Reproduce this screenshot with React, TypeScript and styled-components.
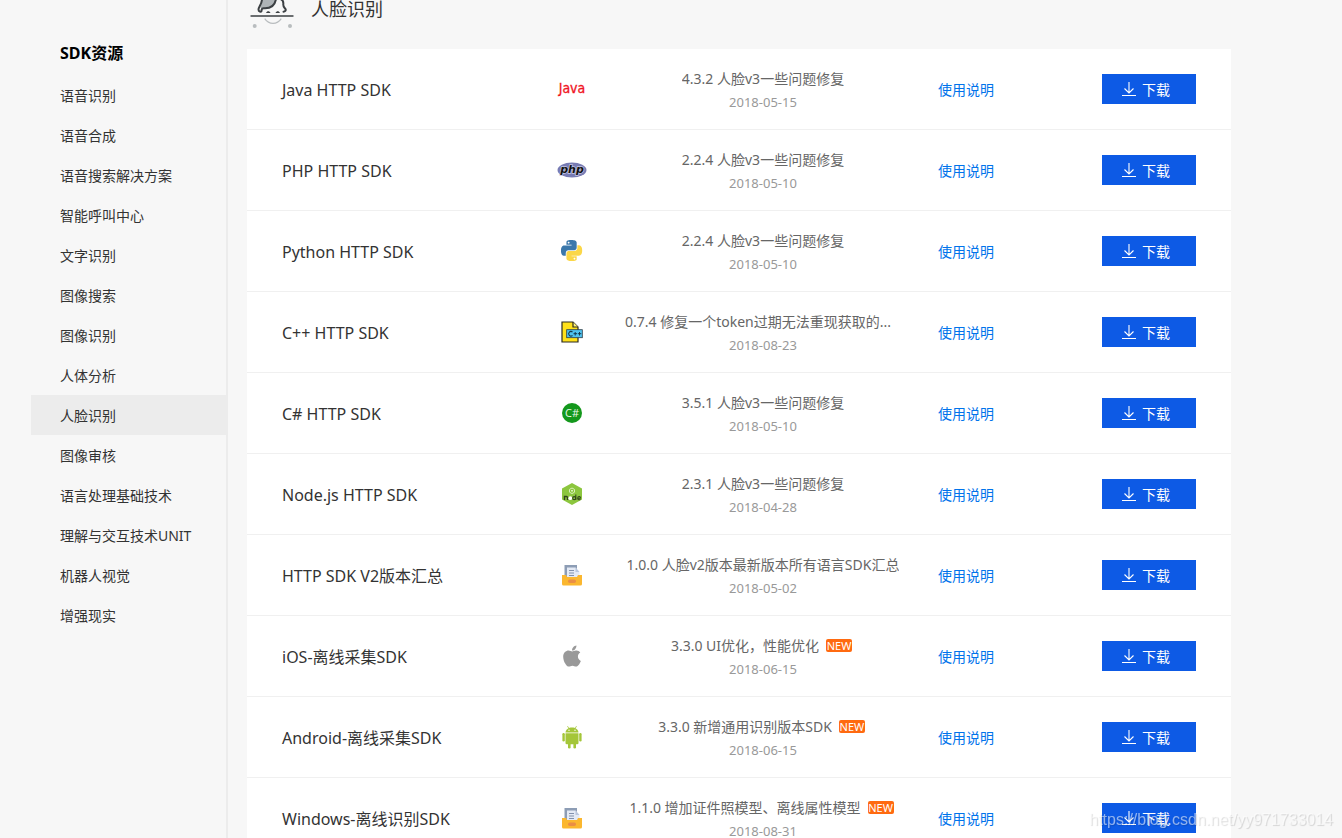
import React from "react";
import styled, { createGlobalStyle } from "styled-components";
import { FaApple } from "react-icons/fa";

const GlobalStyle = createGlobalStyle`
  * { box-sizing: border-box; }
  body {
    margin: 0;
    background: #f7f7f7;
    color: #333;
    font-family: "Noto Sans", "Noto Sans CJK SC", sans-serif;
    font-size: 14px;
  }
`;

const Page = styled.div`
  display: flex;
  height: 100vh;
  overflow: hidden;
  padding: 0 111px 0 31px;
`;

const Sidebar = styled.nav`
  flex: 0 0 197px;
  padding-top: 31px;
  border-right: 2px solid #ececec;
`;

const SidebarTitle = styled.h2`
  margin: 0;
  padding-left: 29px;
  font-size: 16px;
  line-height: 44px;
  color: #000;
`;

const SidebarList = styled.ul`
  margin: 0;
  padding: 0;
  list-style: none;
`;

const SidebarLink = styled.a<{ $active: boolean }>`
  display: block;
  height: 40px;
  padding-left: 29px;
  line-height: 42px;
  color: #333;
  text-decoration: none;
  white-space: nowrap;
  background: ${(p) => (p.$active ? "#ececec" : "transparent")};
`;

const Main = styled.main`
  flex: 1;
  min-width: 0;
  padding-left: 19px;
`;

const SectionHeader = styled.header`
  display: flex;
  align-items: flex-start;
  gap: 17px;
  height: 49px;
  padding-left: 3px;
`;

const SectionTitle = styled.h1`
  margin: 0;
  font-size: 18px;
  font-weight: 400;
  line-height: 18px;
`;

const SdkTable = styled.table`
  width: 100%;
  table-layout: fixed;
  border-collapse: separate;
  border-spacing: 0;
  background: #fff;
`;

const Column = styled.col<{ $width?: number }>`
  width: ${(p) => (p.$width ? `${p.$width}px` : "auto")};
`;

const Row = styled.tr`
  height: 81px;
  > * { border-bottom: 1px solid #f0f0f0; }
`;

const NameCell = styled.th`
  padding: 2px 0 0 35px;
  font-size: 16px;
  font-weight: 400;
  line-height: 24px;
  text-align: left;
`;

const IconCell = styled.td`
  padding: 0;
  text-align: center;
  svg { display: block; margin: 0 auto; }
`;

const VersionCell = styled.td`
  padding: 1px 10px 0;
  text-align: center;
  color: #666;
`;

const VersionLine = styled.div<{ $clipped?: boolean }>`
  display: flex;
  align-items: center;
  justify-content: ${(p) => (p.$clipped ? "flex-start" : "center")};
  gap: 7px;
  line-height: 24px;
`;

const VersionText = styled.span`
  overflow: hidden;
  text-overflow: ellipsis;
  white-space: nowrap;
`;

const NewBadge = styled.span`
  flex: none;
  width: 26px;
  margin-right: 3px;
  border-radius: 2px;
  background: #ff6a10;
  color: #fff;
  font-size: 11px;
  line-height: 13px;
`;

const ReleaseDate = styled.time`
  display: block;
  color: #999;
  font-size: 13px;
  line-height: 22px;
`;

const LinkCell = styled.td`
  padding: 0 0 0 27px;
`;

const DocLink = styled.a`
  color: #0073eb;
  text-decoration: none;
`;

const ActionCell = styled.td`
  padding: 0 35px 0 0;
`;

const DownloadButton = styled.button`
  display: flex;
  align-items: center;
  justify-content: center;
  gap: 6px;
  width: 94px;
  height: 30px;
  margin-left: auto;
  padding: 0 6px 0 0;
  border: 0;
  background: #0d5ae5;
  color: #fff;
  font: inherit;
  cursor: pointer;
`;

const Watermark = styled.div`
  position: fixed;
  right: 9px;
  bottom: 8px;
  font-family: "Liberation Sans", sans-serif;
  font-size: 16px;
  line-height: 20px;
  color: rgba(255, 255, 255, 0.55);
  text-shadow: 1px 1px 1px rgba(0, 0, 0, 0.14);
  pointer-events: none;
`;

const FaceIcon = () => (
  <svg width="44" height="30" viewBox="0 0 44 30" fill="none" aria-hidden="true">
    <path d="M12 0C12 4 10 6 10.500 8L17 8C22 7 26 4 26 0Z" fill="#aeb3b6" />
    <path
      d="M12 -1C12 4 8.500 7 8.500 9.500C8.500 12 11 12 11.500 11C11.500 8.500 12.500 8 14.500 8.300C21 8.500 25 5 26 -1"
      stroke="#3c4043"
      strokeWidth="2"
      strokeLinecap="round"
      strokeLinejoin="round"
    />
    <path
      d="M30.500 -1C33 0 33.500 2 33.300 4C33 7 34.500 7.500 35.500 9C36.200 10.500 35 11.700 33.500 11.700"
      stroke="#3c4043"
      strokeWidth="2"
      strokeLinecap="round"
    />
    <path d="M16 13C17 10.600 19.500 10.600 20.500 13ZM25.500 13C26.500 10.600 29 10.600 30 13Z" fill="#3c4043" />
    <path d="M1 16H43" stroke="#3c4043" strokeWidth="1.400" strokeLinecap="round" />
    <path d="M14.700 18.700C19 25 27 25 31.300 18.700" stroke="#b9bdbf" strokeWidth="1.200" />
    <circle cx="4.700" cy="26" r="2" fill="#b9bdbf" />
    <circle cx="40" cy="26" r="2" fill="#b9bdbf" />
  </svg>
);

const JavaIcon = () => (
  <svg width="30" height="20" viewBox="0 0 30 20" aria-hidden="true">
    <text
      x="15" y="14" textAnchor="middle" fontFamily="Liberation Sans Narrow, DejaVu Sans Condensed, sans-serif" fontSize="14"
      fill="#f0141e" stroke="#f0141e" strokeWidth="0.3"
    >
      Java
    </text>
  </svg>
);

const PhpIcon = () => (
  <svg width="30" height="16" viewBox="0 0 30 16" aria-hidden="true">
    <ellipse cx="15" cy="8" rx="14.500" ry="7.500" fill="#777bb3" />
    <text
      x="15" y="11" textAnchor="middle" fontFamily="DejaVu Sans, sans-serif" fontSize="11" fontWeight="700" fontStyle="italic"
      fill="#111" stroke="#c5c8e6" strokeWidth="1.4" paintOrder="stroke"
    >
      php
    </text>
  </svg>
);

const PythonIcon = () => (
  <svg width="22" height="22" viewBox="0 0 25 25" aria-hidden="true">
    <path
      fill="#3b78ab"
      d="M14.25.18l.9.2.73.26.59.3.45.32.34.34.25.34.16.33.1.3.04.26.02.2-.01.13V8.5l-.05.63-.13.55-.21.46-.26.38-.3.31-.33.25-.35.19-.35.14-.33.1-.3.07-.26.04-.21.02H8.77l-.69.05-.59.14-.5.22-.41.27-.33.32-.27.35-.2.36-.15.37-.1.35-.07.32-.04.27-.02.21v3.06H3.17l-.21-.03-.28-.07-.32-.12-.35-.18-.36-.26-.36-.36-.35-.46-.32-.59-.28-.73-.21-.88-.14-1.05-.05-1.23.06-1.22.16-1.04.24-.87.32-.71.36-.57.4-.44.42-.33.42-.24.4-.16.36-.1.32-.05.24-.01h.16l.06.01h8.16v-.83H6.18l-.01-2.75-.02-.37.05-.34.11-.31.17-.28.25-.26.31-.23.38-.2.44-.18.51-.15.58-.12.64-.1.71-.06.77-.04.84-.02 1.27.05zm-6.3 1.98l-.23.33-.08.41.08.41.23.34.33.22.41.09.41-.09.33-.22.23-.34.08-.41-.08-.41-.23-.33-.33-.22-.41-.09-.41.09z"
    />
    <path
      fill="#fbd748"
      d="M21.04 6.11l.28.06.32.12.35.18.36.27.36.35.35.47.32.59.28.73.21.88.14 1.04.05 1.23-.06 1.23-.16 1.04-.24.86-.32.71-.36.57-.4.45-.42.33-.42.24-.4.16-.36.09-.32.05-.24.02-.16-.01h-8.22v.82h5.84l.01 2.76.02.36-.05.34-.11.31-.17.29-.25.25-.31.24-.38.2-.44.17-.51.15-.58.13-.64.09-.71.07-.77.04-.84.01-1.27-.04-1.07-.14-.9-.2-.73-.25-.59-.3-.45-.33-.34-.34-.25-.34-.16-.33-.1-.3-.04-.25-.02-.2.01-.13v-5.34l.05-.64.13-.54.21-.46.26-.38.3-.32.33-.24.35-.2.35-.14.33-.1.3-.06.26-.04.21-.02.13-.01h5.84l.69-.05.59-.14.5-.21.41-.28.33-.32.27-.35.2-.36.15-.36.1-.35.07-.32.04-.28.02-.21V6.07h2.09l.14.01zM14.57 20.36l-.23.33-.08.41.08.41.23.33.33.23.41.08.41-.08.33-.23.23-.33.08-.41-.08-.41-.23-.33-.33-.23-.41-.08-.41.08z"
    />
  </svg>
);

const CppIcon = () => (
  <svg width="22" height="22" viewBox="0 0 22 22" aria-hidden="true">
    <path d="M1 1H12L17 6V21H1Z" fill="#ffe11a" stroke="#2b2a22" strokeWidth="1.2" />
    <path d="M12 1V6H17" fill="#fff27a" stroke="#2b2a22" strokeWidth="1.2" />
    <rect x="5.700" y="8.700" width="15.600" height="8" fill="#4fc3f0" stroke="#2b3a44" strokeWidth="0.8" />
    <path d="M11.500 11A2.300 2.300 0 1 0 11.500 14.500" fill="none" stroke="#14394c" strokeWidth="1.1" />
    <path d="M12.500 12.700H16M14.200 11V14.500M16.800 12.700H20.300M18.500 11V14.500" stroke="#14394c" />
  </svg>
);

const CSharpIcon = () => (
  <svg width="20" height="20" viewBox="0 0 20 20" aria-hidden="true">
    <circle cx="10" cy="10" r="10" fill="#14981c" />
    <text x="10" y="14" textAnchor="middle" fontFamily="Open Sans, sans-serif" fontSize="11" fill="#e9f7e9">
      C#
    </text>
  </svg>
);

const NodeIcon = () => (
  <svg width="20" height="22" viewBox="0 0 20 22" aria-hidden="true">
    <path d="M10 0L20 5.500V16.500L10 22L0 16.500V5.500Z" fill="#8cc63e" />
    <path d="M10 5L12.500 6.400V9.200L10 10.600L7.500 9.200V6.400Z" fill="none" stroke="#d9efb8" strokeWidth="1" />
    <path d="M9 7H11V8.500H9Z" fill="#d9efb8" />
    <path d="M2.500 17V13.500H4.500Q5.500 13.500 5.500 15V17" fill="none" stroke="#33451c" strokeWidth="1.4" />
    <circle cx="8.300" cy="15.200" r="1.900" fill="#fff" />
    <circle cx="12.200" cy="15.200" r="1.500" fill="none" stroke="#33451c" strokeWidth="1.2" />
    <path d="M13.800 11.500V17M18.500 16.500Q15.700 17.400 15.700 15.200Q15.700 13.500 17.200 13.500T18.300 15.200H16" fill="none" stroke="#33451c" strokeWidth="1.1" />
  </svg>
);

const ArchiveIcon = () => (
  <svg width="20" height="21" viewBox="0 0 20 21" aria-hidden="true">
    <path d="M2.500 0H15V14H2.500Z" fill="#8d9db5" />
    <path d="M5 2.500H13.500L17.500 7V14H5Z" fill="#e4eaf5" />
    <path d="M13.500 2.500V7H17.500Z" fill="#bac6dd" />
    <path d="M7 5.500H12M7 8H12M7 10.500H12" stroke="#8291ac" strokeWidth="1.2" />
    <path d="M0 10H4L5 12H15L16 10H20V19Q20 20.500 18.500 20.500H1.500Q0 20.500 0 19Z" fill="#fbb72f" />
    <rect x="6" y="14.500" width="8" height="3.500" rx="1.700" fill="#ea8e46" />
  </svg>
);

const AndroidIcon = () => (
  <svg width="20" height="23" viewBox="0 0 20 23" aria-hidden="true">
    <g fill="#a4c639">
      <path d="M3.500 6.500C3.700 3.500 6.500 1.500 10 1.500S16.300 3.500 16.500 6.500Z" />
      <path d="M3.500 7.300H16.500V17Q16.500 18.300 15.200 18.300H4.800Q3.500 18.300 3.500 17Z" />
      <rect x="0.400" y="7" width="2.400" height="8.500" rx="1.200" />
      <rect x="17.200" y="7" width="2.400" height="8.500" rx="1.200" />
      <rect x="6" y="16" width="2.600" height="6.500" rx="1.300" />
      <rect x="11.400" y="16" width="2.600" height="6.500" rx="1.300" />
    </g>
    <path d="M5.700 0.500L7 2.600M14.300 0.500L13 2.600" stroke="#a4c639" strokeWidth="0.8" strokeLinecap="round" />
    <circle cx="7" cy="4.200" r="0.700" fill="#fff" />
    <circle cx="13" cy="4.200" r="0.700" fill="#fff" />
  </svg>
);

const DownloadIcon = () => (
  <svg width="14" height="15" viewBox="0 0 14 15" fill="none" stroke="#fff" aria-hidden="true">
    <path d="M7 0V11M2.500 6.500L7 11L11.500 6.500" strokeWidth="1.1" />
    <path d="M0 13.500H14" />
  </svg>
);

const categories = [
  "语音识别", "语音合成", "语音搜索解决方案", "智能呼叫中心", "文字识别", "图像搜索", "图像识别",
  "人体分析", "人脸识别", "图像审核", "语言处理基础技术", "理解与交互技术UNIT", "机器人视觉", "增强现实",
];

interface Sdk {
  name: string;
  icon: React.ReactNode;
  version: string;
  date: string;
  isNew?: boolean;
  clipped?: boolean;
}

const sdks: Sdk[] = [
  { name: "Java HTTP SDK", icon: <JavaIcon />, version: "4.3.2 人脸v3一些问题修复", date: "2018-05-15" },
  { name: "PHP HTTP SDK", icon: <PhpIcon />, version: "2.2.4 人脸v3一些问题修复", date: "2018-05-10" },
  { name: "Python HTTP SDK", icon: <PythonIcon />, version: "2.2.4 人脸v3一些问题修复", date: "2018-05-10" },
  { name: "C++ HTTP SDK", icon: <CppIcon />, version: "0.7.4 修复一个token过期无法重现获取的...", date: "2018-08-23", clipped: true },
  { name: "C# HTTP SDK", icon: <CSharpIcon />, version: "3.5.1 人脸v3一些问题修复", date: "2018-05-10" },
  { name: "Node.js HTTP SDK", icon: <NodeIcon />, version: "2.3.1 人脸v3一些问题修复", date: "2018-04-28" },
  { name: "HTTP SDK V2版本汇总", icon: <ArchiveIcon />, version: "1.0.0 人脸v2版本最新版本所有语言SDK汇总", date: "2018-05-02" },
  { name: "iOS-离线采集SDK", icon: <FaApple size={24} color="#999" />, version: "3.3.0 UI优化，性能优化", date: "2018-06-15", isNew: true },
  { name: "Android-离线采集SDK", icon: <AndroidIcon />, version: "3.3.0 新增通用识别版本SDK", date: "2018-06-15", isNew: true },
  { name: "Windows-离线识别SDK", icon: <ArchiveIcon />, version: "1.1.0 增加证件照模型、离线属性模型", date: "2018-08-31", isNew: true },
];

export default function App() {
  return (
    <>
      <GlobalStyle />
      <Page lang="zh-CN">
        <Sidebar>
          <SidebarTitle>SDK资源</SidebarTitle>
          <SidebarList>
            {categories.map((label) => (
              <li key={label}>
                <SidebarLink href="#" $active={label === "人脸识别"}>{label}</SidebarLink>
              </li>
            ))}
          </SidebarList>
        </Sidebar>
        <Main>
          <SectionHeader>
            <FaceIcon />
            <SectionTitle>人脸识别</SectionTitle>
          </SectionHeader>
          <SdkTable>
            <colgroup>
              <Column />
              <Column $width={86} />
              <Column $width={296} />
              <Column $width={156} />
              <Column $width={164} />
            </colgroup>
            <tbody>
              {sdks.map((sdk) => (
                <Row key={sdk.name}>
                  <NameCell scope="row">{sdk.name}</NameCell>
                  <IconCell>{sdk.icon}</IconCell>
                  <VersionCell>
                    <VersionLine $clipped={sdk.clipped}>
                      <VersionText>{sdk.version}</VersionText>
                      {sdk.isNew && <NewBadge>NEW</NewBadge>}
                    </VersionLine>
                    <ReleaseDate dateTime={sdk.date}>{sdk.date}</ReleaseDate>
                  </VersionCell>
                  <LinkCell>
                    <DocLink href="#">使用说明</DocLink>
                  </LinkCell>
                  <ActionCell>
                    <DownloadButton type="button">
                      <DownloadIcon />
                      下载
                    </DownloadButton>
                  </ActionCell>
                </Row>
              ))}
            </tbody>
          </SdkTable>
        </Main>
      </Page>
      <Watermark>https://blog.csdn.net/yy971733014</Watermark>
    </>
  );
}
